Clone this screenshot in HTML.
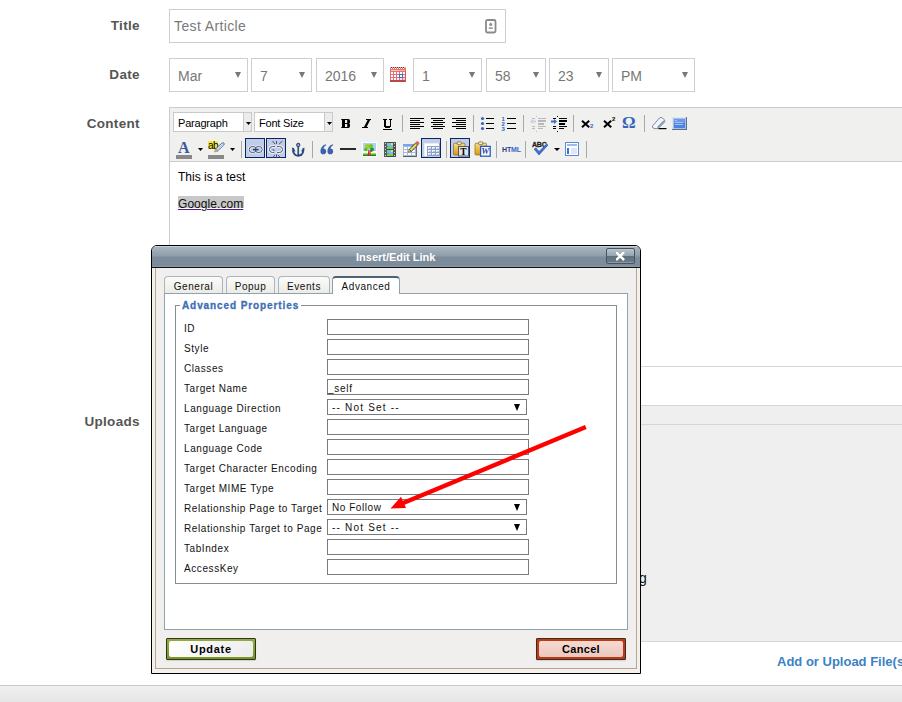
<!DOCTYPE html>
<html><head><meta charset="utf-8">
<style>
*{box-sizing:border-box;}
html,body{margin:0;padding:0;width:902px;height:702px;overflow:hidden;background:#fff;font-family:"Liberation Sans",sans-serif;}
.a{position:absolute;}
.lbl{position:absolute;font-weight:bold;font-size:13.5px;color:#555;text-align:right;width:100px;line-height:16px;letter-spacing:0.3px;}
.box{position:absolute;border:1px solid #cfcfcf;background:#fff;height:34px;top:58px;}
.box span{position:absolute;left:8px;top:9px;font-size:14px;color:#777;line-height:16px;}
.box i{position:absolute;right:6px;top:13px;width:0;height:0;border-left:3px solid transparent;border-right:3px solid transparent;border-top:6px solid #777;}
/* page regions */
.hl{position:absolute;left:0;width:902px;height:1px;background:#d6d6d6;}
/* dialog */
#dlg{position:absolute;left:151px;top:245px;width:490px;height:429px;border:1px solid #000;border-radius:6px 6px 0 0;background:#f0efed;overflow:hidden;}
#ttl{position:absolute;left:0;top:0;width:488px;height:22px;background:linear-gradient(#c6d1d9 0px,#c6d1d9 1px,#a9b6c0 1px,#8e9daa 10px,#7c8c9a 11px,#7c8c9a 20px,#8898a6 20px,#8898a6 21px);border-bottom:1px solid #111;}
#ttl span{position:absolute;left:204px;top:5px;font:bold 11px "Liberation Sans",sans-serif;color:#fff;line-height:13px;}
.dl{position:absolute;font-size:10px;letter-spacing:0.58px;color:#111;line-height:12px;white-space:nowrap;}
.inp{position:absolute;left:175px;width:202px;height:16px;border:1px solid #7b7b7b;background:#fff;}
.sel{position:absolute;left:175px;width:200px;height:16px;border:1px solid #7b7b7b;background:#fff;}
.sel span,.inp span{position:absolute;left:4px;top:2px;font-size:10px;letter-spacing:0.55px;line-height:12px;color:#111;white-space:nowrap;}
.sel i{position:absolute;right:6px;top:4px;width:0;height:0;border-left:3.5px solid transparent;border-right:3.5px solid transparent;border-top:7px solid #000;}
.tab{position:absolute;top:30px;height:17px;border:1px solid #a9b5bf;border-bottom:none;border-radius:4px 4px 0 0;background:linear-gradient(#fbfbf9,#ecebe5);font-size:10px;letter-spacing:0.55px;line-height:14px;padding-top:3px;text-align:center;color:#111;}
#frame{position:absolute;left:0;top:22px;width:488px;height:405px;border:3px solid #f5f0ea;border-top:none;border-bottom-width:4px;}
#frame:after{content:"";position:absolute;left:0;top:0;right:0;bottom:0;border:1px solid #b3a597;border-top:none;}
#panel{position:absolute;left:12px;top:47px;width:464px;height:337px;border:1px solid #8fa2b2;background:#fff;}
.tab.act{top:30px;height:18px;padding-top:2px;border-color:#8fa2b2;border-top:2px solid #4d6273;background:#fff;z-index:2;}
#fs{position:absolute;left:23px;top:59px;width:442px;height:279px;border:1px solid #84908f;}
#lg{position:absolute;left:28px;top:54px;padding:0 2px;background:#fff;font:bold 10px "Liberation Sans",sans-serif;letter-spacing:0.9px;color:#3d6eb3;-webkit-text-stroke:0.3px #3d6eb3;line-height:12px;}
.btn{position:absolute;top:392px;width:90px;height:22px;border:1px solid #2e3322;border-radius:1px;font:bold 11px "Liberation Sans",sans-serif;letter-spacing:0.7px;text-align:center;line-height:21px;color:#000;box-shadow:0 1px 1px rgba(0,0,0,0.12);}
.btn b{position:absolute;left:2px;top:2px;right:2px;bottom:2px;border-radius:2px;}
.btn span{position:relative;}
#bupd{left:14px;background:linear-gradient(#93ab3c,#7a9422);}
#bupd b{background:linear-gradient(135deg,#ffffff,#f3f3f3 60%,#ececec);}
#bcan{left:384px;background:#c63612;}
#bcan b{background:linear-gradient(#f6dad0,#ecc8be);}
#xbtn{position:absolute;left:454px;top:2px;width:29px;height:16px;border:1px solid #48545f;border-radius:2px;background:linear-gradient(#bcc7cf 0px,#b3bfc8 1px,#95a3ae 7px,#5e6f7e 7px,#6a7a88 13px,#8b98a2 13px);}
.tbt{font-size:11px;line-height:13px;color:#000;letter-spacing:-0.2px;white-space:nowrap;}
.serif{font-family:"Liberation Serif",serif;font-size:13px;line-height:14px;color:#000;}
.sep{width:1px;height:17px;background:#a8a8a8;}
.act2{top:138px;width:20px;height:20px;border:1px solid #0a246a;background:#c1cde6;}
</style></head><body>

<!-- Title row -->
<div class="lbl" style="left:39.8px;top:18px;">Title</div>
<div class="a" style="left:169px;top:9px;width:337px;height:34px;border:1px solid #cfcfcf;"></div>
<div class="a" style="left:174px;top:18px;font-size:14px;color:#7a7a7a;line-height:16px;letter-spacing:0.38px;">Test Article</div>

<!-- Date row -->
<div class="lbl" style="left:39.8px;top:67px;">Date</div>
<div class="box" style="left:169px;width:79px;"><span>Mar</span><i></i></div>
<div class="box" style="left:251px;width:61px;"><span>7</span><i></i></div>
<div class="box" style="left:316px;width:68px;"><span>2016</span><i></i></div>
<div class="box" style="left:413px;width:69px;"><span>1</span><i></i></div>
<div class="box" style="left:486px;width:60px;"><span>58</span><i></i></div>
<div class="box" style="left:549px;width:60px;"><span>23</span><i></i></div>
<div class="box" style="left:612px;width:83px;"><span>PM</span><i></i></div>

<!-- Content -->
<div class="lbl" style="left:39.8px;top:116px;">Content</div>
<div class="a" style="left:169px;top:107px;width:740px;height:260px;border:1px solid #ccc;background:#fff;"></div>
<div class="a" style="left:170px;top:108px;width:740px;height:54px;background:#f0f0ee;border-bottom:1px solid #ccc;"></div>
<div class="a" style="left:178px;top:170px;font-size:12px;line-height:14px;color:#000;">This is a test</div>
<div class="a" style="left:178px;top:196px;width:66px;height:12px;background:#c8c8c8;"></div>
<div class="a" style="left:178px;top:197px;font-size:12px;line-height:14px;color:#111;text-decoration:underline;text-decoration-color:#551a8b;letter-spacing:0.05px;">Google.com</div>


<!-- title input icon -->
<svg class="a" style="left:485px;top:19px;" width="12" height="15" viewBox="0 0 12 15"><rect x="1" y="1" width="9.5" height="12.5" rx="1.5" fill="none" stroke="#8a8a8a" stroke-width="1.8"/><path d="M5.75 3 L7.1 6.3 L4.4 6.3 Z" fill="#909090"/><circle cx="5.75" cy="5.6" r="1.5" fill="#909090"/><rect x="3.8" y="8.2" width="4" height="1.8" fill="#a0a0a0"/></svg>
<!-- calendar icon -->
<svg class="a" style="left:390px;top:67px;" width="16" height="15" viewBox="0 0 16 15" shape-rendering="crispEdges">
<rect x="0" y="1" width="16" height="14" fill="#e9706b"/>
<rect x="0" y="0" width="16" height="1" fill="#f2a9a5"/>
<g fill="#4a3a3a"><rect x="1" y="0" width="1" height="1"/><rect x="3" y="0" width="1" height="1"/><rect x="5" y="0" width="1" height="1"/><rect x="7" y="0" width="1" height="1"/><rect x="9" y="0" width="1" height="1"/><rect x="11" y="0" width="1" height="1"/><rect x="13" y="0" width="1" height="1"/></g>
<g fill="#fff"><rect x="1" y="1" width="1" height="1"/><rect x="3" y="1" width="1" height="1"/><rect x="5" y="1" width="1" height="1"/><rect x="7" y="1" width="1" height="1"/><rect x="9" y="1" width="1" height="1"/><rect x="11" y="1" width="1" height="1"/><rect x="13" y="1" width="1" height="1"/></g>
<rect x="1" y="3" width="7" height="1" fill="#f7d0ce"/><rect x="8" y="3" width="7" height="1" fill="#f0b0ad"/>
<g fill="#fff"><rect x="1" y="5" width="2" height="2"/><rect x="4" y="5" width="2" height="2"/><rect x="7" y="5" width="2" height="2"/><rect x="10" y="5" width="2" height="2"/><rect x="13" y="5" width="2" height="2"/>
<rect x="1" y="8" width="2" height="2"/><rect x="4" y="8" width="2" height="2"/><rect x="7" y="8" width="2" height="2"/><rect x="13" y="8" width="2" height="2" fill="#fbe3e2"/>
<rect x="1" y="11" width="2" height="2"/><rect x="4" y="11" width="2" height="2"/><rect x="7" y="11" width="2" height="2"/><rect x="10" y="11" width="2" height="2" fill="#fbe3e2"/><rect x="13" y="11" width="2" height="2" fill="#f5d0ce"/></g>
<rect x="9" y="7" width="4" height="4" fill="#2f6fe0"/><rect x="10" y="8" width="2" height="2" fill="#fff"/>
<rect x="0" y="13" width="16" height="2" fill="#b84a45"/><rect x="15" y="4" width="1" height="10" fill="#c9625d"/>
</svg>

<!-- editor toolbar -->
<div class="a" style="left:173px;top:112px;width:79px;height:20px;border:1px solid #c9c9c9;background:#fff;"></div>
<div class="a" style="left:243px;top:112px;width:9px;height:20px;border:1px solid #c9c9c9;background:#ececec;"></div>
<div class="a tbt" style="left:178px;top:117px;">Paragraph</div>
<svg class="a" style="left:246px;top:122px;" width="5" height="3"><path d="M0 0H5L2.5 3Z" fill="#000"/></svg>
<div class="a" style="left:254px;top:112px;width:79px;height:20px;border:1px solid #c9c9c9;background:#fff;"></div>
<div class="a" style="left:324px;top:112px;width:9px;height:20px;border:1px solid #c9c9c9;background:#ececec;"></div>
<div class="a tbt" style="left:259px;top:117px;">Font Size</div>
<svg class="a" style="left:327px;top:122px;" width="5" height="3"><path d="M0 0H5L2.5 3Z" fill="#000"/></svg>
<svg class="a" style="left:341px;top:119px;" width="10" height="10" viewBox="0 0 10 10"><path d="M0 0 H7.3 Q9 0 9 2 V3.2 Q9 4.2 8.2 4.5 Q9 4.8 9 5.8 V7 Q9 9 7.3 9 H0 V8.2 H1 V0.8 H0 Z" fill="#000"/><rect x="4" y="1" width="2.2" height="3" fill="#f0f0f0"/><rect x="4" y="5" width="2.2" height="3" fill="#f0f0f0"/></svg>
<svg class="a" style="left:362px;top:119px;" width="10" height="10" viewBox="0 0 10 10"><path d="M4 0 H9 V1 H8.2 L4.6 8 H6 V9 H0 V8 H2 L5.6 1 H4 Z" fill="#000"/></svg>
<svg class="a" style="left:383px;top:119px;" width="10" height="12" viewBox="0 0 10 12" shape-rendering="crispEdges"><rect x="0" y="0" width="4" height="1" fill="#000"/><rect x="6" y="0" width="3" height="1" fill="#000"/><rect x="1" y="0" width="2" height="8" fill="#000"/><rect x="7" y="0" width="1" height="8" fill="#000"/><rect x="2" y="7" width="5" height="2" fill="#000"/><rect x="0" y="10" width="9" height="1" fill="#000"/></svg>
<div class="a sep" style="left:402px;top:115px;"></div>
<div class="a sep" style="left:473px;top:115px;"></div>
<div class="a sep" style="left:523px;top:115px;"></div>
<div class="a sep" style="left:573px;top:115px;"></div>
<div class="a sep" style="left:644px;top:115px;"></div>
<div class="a sep" style="left:241px;top:141px;"></div>
<div class="a sep" style="left:312px;top:141px;"></div>
<div class="a sep" style="left:446px;top:141px;"></div>
<div class="a sep" style="left:496px;top:141px;"></div>
<div class="a sep" style="left:525px;top:141px;"></div>
<div class="a sep" style="left:586px;top:141px;"></div>
<svg class="a" style="left:410px;top:117px;" width="14" height="12" shape-rendering="crispEdges"><rect x="0" y="1" width="14" height="1" fill="#000"/><rect x="0" y="3" width="10" height="1" fill="#000"/><rect x="0" y="5" width="14" height="1" fill="#000"/><rect x="0" y="7" width="10" height="1" fill="#000"/><rect x="0" y="9" width="14" height="1" fill="#000"/><rect x="0" y="11" width="10" height="1" fill="#000"/></svg>
<svg class="a" style="left:431px;top:117px;" width="14" height="12" shape-rendering="crispEdges"><rect x="0" y="1" width="14" height="1" fill="#000"/><rect x="2" y="3" width="10" height="1" fill="#000"/><rect x="0" y="5" width="14" height="1" fill="#000"/><rect x="2" y="7" width="10" height="1" fill="#000"/><rect x="0" y="9" width="14" height="1" fill="#000"/><rect x="2" y="11" width="10" height="1" fill="#000"/></svg>
<svg class="a" style="left:452px;top:117px;" width="14" height="12" shape-rendering="crispEdges"><rect x="0" y="1" width="14" height="1" fill="#000"/><rect x="4" y="3" width="10" height="1" fill="#000"/><rect x="0" y="5" width="14" height="1" fill="#000"/><rect x="4" y="7" width="10" height="1" fill="#000"/><rect x="0" y="9" width="14" height="1" fill="#000"/><rect x="4" y="11" width="10" height="1" fill="#000"/></svg>
<svg class="a" style="left:480px;top:116px;" width="16" height="15"><g fill="#3a64b8"><circle cx="2.5" cy="2.5" r="1.6"/><circle cx="2.5" cy="7.5" r="1.6"/><circle cx="2.5" cy="12.5" r="1.6"/></g><g fill="#000" shape-rendering="crispEdges"><rect x="6" y="2" width="8" height="1"/><rect x="6" y="7" width="8" height="1"/><rect x="6" y="12" width="8" height="1"/></g></svg>
<svg class="a" style="left:501px;top:116px;" width="16" height="15"><g fill="#2f5ec8" font-family="Liberation Sans" font-weight="bold" font-size="6"><text x="0.5" y="5">1</text><text x="0.5" y="10">2</text><text x="0.5" y="15">3</text></g><g fill="#000" shape-rendering="crispEdges"><rect x="6" y="2" width="9" height="1"/><rect x="6" y="7" width="9" height="1"/><rect x="6" y="12" width="9" height="1"/></g></svg>
<svg class="a" style="left:530px;top:116px;" width="17" height="16" shape-rendering="crispEdges"><g fill="#b9b9b9"><rect x="6" y="0" width="1" height="1"/><rect x="6" y="15" width="1" height="1"/><rect x="2" y="2" width="3" height="1"/><rect x="8" y="2" width="8" height="1"/><rect x="8" y="4" width="8" height="2"/><rect x="8" y="7" width="6" height="2"/><rect x="2" y="10" width="3" height="1"/><rect x="8" y="10" width="8" height="1"/><rect x="2" y="12" width="3" height="1"/><rect x="8" y="12" width="5" height="1"/></g><path d="M0 5.5 L3 3 L3 4.5 L6 4.5 L6 6.5 L3 6.5 L3 8Z" fill="#c6d3ee" shape-rendering="auto"/></svg>
<svg class="a" style="left:551px;top:116px;" width="17" height="16" shape-rendering="crispEdges"><g fill="#000"><rect x="6" y="0" width="1" height="1"/><rect x="6" y="15" width="1" height="1"/><rect x="2" y="2" width="3" height="1"/><rect x="8" y="2" width="8" height="1"/><rect x="8" y="4" width="8" height="2"/><rect x="8" y="7" width="6" height="2"/><rect x="2" y="10" width="3" height="1"/><rect x="8" y="10" width="8" height="1"/><rect x="2" y="12" width="3" height="1"/><rect x="8" y="12" width="5" height="1"/></g><path d="M6 5.5 L3 3 L3 4.5 L0 4.5 L0 6.5 L3 6.5 L3 8Z" fill="#3a6ad0" shape-rendering="auto"/></svg>
<svg class="a" style="left:581px;top:120px;" width="10" height="8" viewBox="0 0 10 8"><path d="M1 0.8 L8.2 7.2 M8.2 0.8 L1 7.2" stroke="#000" stroke-width="2.0"/></svg>
<div class="a" style="left:590px;top:123px;font:bold 6px 'Liberation Sans',sans-serif;line-height:7px;color:#3a64b8;">2</div>
<svg class="a" style="left:603px;top:120px;" width="10" height="8" viewBox="0 0 10 8"><path d="M1 0.8 L8.2 7.2 M8.2 0.8 L1 7.2" stroke="#000" stroke-width="2.0"/></svg>
<div class="a" style="left:612px;top:116px;font:bold 6px 'Liberation Sans',sans-serif;line-height:7px;color:#000;">2</div>
<div class="a" style="left:622px;top:114px;font:bold 17px 'Liberation Serif',serif;line-height:17px;color:#3a64b8;">&#937;</div>
<svg class="a" style="left:651px;top:116px;" width="16" height="14" viewBox="0 0 16 14"><path d="M1.5 10 L8.5 2 Q10 0.8 11.5 2 L13.3 3.8 Q14.5 5 13.3 6.3 L7 12.6 L4 12.6 Q1.5 12.3 1.3 11 Z" fill="#f2f5fb" stroke="#6a7fa0" stroke-width="0.9"/><path d="M13.3 4.2 Q14.3 5.2 13.2 6.4 L7.4 12.2 L5.8 11.2 L11.8 5 Z" fill="#8b9cb8"/><rect x="7.5" y="12" width="8" height="1.2" fill="#000"/></svg>
<svg class="a" style="left:672px;top:117px;" width="15" height="13" viewBox="0 0 15 13" shape-rendering="crispEdges"><rect x="0" y="0" width="15" height="13" fill="#5a6e90"/><rect x="0" y="0" width="14" height="12" fill="#dfe7f5"/><rect x="1" y="1" width="13" height="11" fill="#aebfe0"/><rect x="2" y="2" width="11" height="9" fill="#4f83e2"/><rect x="2" y="2" width="11" height="4" fill="#6d97e8"/><g fill="#a8c4f4"><rect x="3" y="3" width="2" height="1"/><rect x="3" y="5" width="8" height="1"/><rect x="3" y="7" width="8" height="1"/></g></svg>

<!-- row 2 -->
<div class="a serif" style="left:178px;top:140px;font-size:16px;line-height:16px;font-weight:bold;color:#3a5c9c;">A</div>
<div class="a" style="left:176px;top:155px;width:16px;height:4px;background:#888;"></div>
<svg class="a" style="left:198px;top:148px;" width="5" height="3"><path d="M0 0H5L2.5 3Z" fill="#000"/></svg>
<div class="a" style="left:208px;top:141px;width:10px;height:8px;background:#f3ea40;"></div>
<div class="a" style="left:208px;top:140px;font:10px 'Liberation Sans',sans-serif;line-height:11px;color:#000;letter-spacing:-0.5px;">ab</div>
<svg class="a" style="left:213px;top:142px;" width="12" height="11" viewBox="0 0 12 11"><path d="M2.5 7 L8.8 1.2 Q10 0.3 11 1.2 Q11.6 2 10.8 3 L4.6 9 Z" fill="#e8f0fb" stroke="#41608f" stroke-width="0.9"/><path d="M2.5 7 L4.6 9 L1.5 10 Z" fill="#e9c27a" stroke="#8a6a30" stroke-width="0.5"/><path d="M4 7.5 L9.8 2" stroke="#9ab4dc" stroke-width="0.8"/></svg>
<div class="a" style="left:208px;top:155px;width:16px;height:4px;background:#888;"></div>
<svg class="a" style="left:230px;top:148px;" width="5" height="3"><path d="M0 0H5L2.5 3Z" fill="#000"/></svg>
<div class="a act2" style="left:245px;"></div>
<div class="a act2" style="left:266px;"></div>
<div class="a act2" style="left:421px;"></div>
<div class="a act2" style="left:450px;"></div>
<svg class="a" style="left:248px;top:145px;" width="16" height="9" viewBox="0 0 16 9"><g fill="none"><rect x="1.2" y="1.5" width="7" height="6" rx="3" stroke="#f4f6fa" stroke-width="2.2"/><rect x="7.2" y="1.5" width="7" height="6" rx="3" stroke="#f4f6fa" stroke-width="2.2"/><rect x="1.2" y="1.5" width="7" height="6" rx="3" stroke="#4b5a6e" stroke-width="1"/><rect x="7.2" y="1.5" width="7" height="6" rx="3" stroke="#4b5a6e" stroke-width="1"/></g><rect x="5" y="3.8" width="5.5" height="1.6" fill="#1c3f94"/></svg>
<svg class="a" style="left:267px;top:140px;" width="19" height="18" viewBox="0 0 19 18"><g fill="none" stroke-linecap="round"><path d="M7.5 6.5 H5.5 Q2.5 6.5 2.5 9.5 Q2.5 12.5 5.5 12.5 H7" stroke="#f4f6fa" stroke-width="2.4"/><path d="M10.5 6.5 H12.5 Q15.5 6.5 15.5 9.5 Q15.5 12.5 12.5 12.5 H10.5" stroke="#f4f6fa" stroke-width="2.4"/><path d="M7.5 6.5 H5.5 Q2.5 6.5 2.5 9.5 Q2.5 12.5 5.5 12.5 H7" stroke="#4b5a6e" stroke-width="1"/><path d="M10.5 6.5 H12.5 Q15.5 6.5 15.5 9.5 Q15.5 12.5 12.5 12.5 H10.5" stroke="#4b5a6e" stroke-width="1"/></g><path d="M7 9.5 L5 9.5 L7.5 11.5Z" fill="#1c3f94"/><g stroke="#3a4660" stroke-width="0.9"><path d="M9.5 1V4"/><path d="M5.5 1L8 4"/><path d="M15.5 1L12 4.2"/><path d="M9.5 14.5V18"/><path d="M5.5 18L8 14.8"/><path d="M13.5 18L11 14.8"/></g></svg>
<svg class="a" style="left:292px;top:142px;" width="13" height="15" viewBox="0 0 13 15"><circle cx="6.2" cy="3" r="1.5" fill="#dfe6f2" stroke="#34507e" stroke-width="1.3"/><rect x="5.4" y="4.3" width="1.7" height="9" fill="#34507e"/><path d="M1.2 6 L1.3 10 Q2.5 13.6 6.2 13.8 Q9.9 13.6 11.1 10 L11.6 6.2" fill="none" stroke="#2e4a7e" stroke-width="1.9"/><path d="M0.3 5 L3.6 9.2 L0.6 9.8Z" fill="#2e4a7e"/><path d="M12.2 5.2 L8.9 9.2 L11.9 9.8Z" fill="#2e4a7e"/><rect x="5.8" y="12.6" width="4" height="1.2" fill="#1a3aa0"/></svg>
<svg class="a" style="left:320px;top:144px;" width="14" height="11" viewBox="0 0 14 11"><g fill="#3a62b0"><circle cx="3.3" cy="7.4" r="2.8"/><path d="M0.5 7.5 C0.4 4 2.4 1.3 5.8 0.2 L6.2 1.2 C4.3 2.2 3.4 3.6 3.6 5.2 L0.8 6.5Z"/><circle cx="10.3" cy="7.4" r="2.8"/><path d="M7.5 7.5 C7.4 4 9.4 1.3 12.8 0.2 L13.2 1.2 C11.3 2.2 10.4 3.6 10.6 5.2 L7.8 6.5Z"/></g></svg>
<div class="a" style="left:340px;top:148px;width:16px;height:2px;background:#2a2a2a;"></div>
<svg class="a" style="left:362px;top:142px;" width="15" height="15" viewBox="0 0 15 15" shape-rendering="crispEdges"><rect x="0" y="0" width="15" height="15" fill="#fdfdfd"/><rect x="1" y="1" width="13" height="8" fill="#a9d1f7"/><rect x="1" y="9" width="13" height="2" fill="#fdfdfd"/><rect x="1" y="11" width="13" height="3" fill="#5ab82a"/><rect x="1" y="11" width="13" height="1" fill="#a8dc50"/><rect x="1" y="13" width="13" height="1" fill="#0d8a0d"/><g shape-rendering="auto"><circle cx="5.5" cy="4.5" r="2.6" fill="#9ad22a"/><circle cx="9" cy="4" r="2" fill="#7cc21e"/><circle cx="10" cy="7.5" r="2" fill="#1e9a22"/><circle cx="3.8" cy="7.5" r="1.7" fill="#6cb81a"/><path d="M7 8 L6.2 13.5 L8 13.5 L8 10 L10 8.5" stroke="#b8282a" stroke-width="1.1" fill="none"/></g></svg>
<svg class="a" style="left:384px;top:142px;" width="12" height="15" viewBox="0 0 12 15" shape-rendering="crispEdges"><rect x="0" y="0" width="12" height="15" fill="#454545"/><rect x="0" y="0" width="3" height="15" fill="#5a5a5a"/><rect x="9" y="0" width="3" height="15" fill="#505050"/><rect x="3" y="1" width="6" height="6" fill="#6cc0f0"/><rect x="3" y="8" width="6" height="6" fill="#6cc0f0"/><rect x="3" y="5" width="6" height="2" fill="#78d050"/><rect x="3" y="12" width="6" height="2" fill="#78d050"/><rect x="3" y="4" width="2" height="1" fill="#50b040"/><rect x="3" y="11" width="2" height="1" fill="#50b040"/><rect x="7" y="1" width="2" height="2" fill="#f0e060"/><rect x="7" y="8" width="2" height="2" fill="#f0e060"/><g fill="#cfcfcf"><rect x="1" y="1" width="1" height="1"/><rect x="1" y="4" width="1" height="1"/><rect x="1" y="7" width="1" height="1"/><rect x="1" y="10" width="1" height="1"/><rect x="1" y="13" width="1" height="1"/><rect x="10" y="1" width="1" height="1"/><rect x="10" y="4" width="1" height="1"/><rect x="10" y="7" width="1" height="1"/><rect x="10" y="10" width="1" height="1"/><rect x="10" y="13" width="1" height="1"/></g></svg>
<svg class="a" style="left:403px;top:141px;" width="17" height="16" viewBox="0 0 17 16"><g shape-rendering="crispEdges"><rect x="0" y="3" width="14" height="13" fill="#a9b9d2"/><rect x="0" y="3" width="14" height="2" fill="#7ca2ea"/><g fill="#fbfcfe"><rect x="1" y="6" width="3" height="2"/><rect x="5" y="6" width="3" height="2"/><rect x="9" y="6" width="3" height="2"/><rect x="1" y="9" width="3" height="2"/><rect x="5" y="9" width="3" height="2"/><rect x="9" y="9" width="3" height="2"/><rect x="1" y="12" width="3" height="2"/><rect x="5" y="12" width="3" height="2"/><rect x="9" y="12" width="3" height="2"/></g><rect x="0" y="15" width="14" height="1" fill="#4c5c7a"/><rect x="13" y="5" width="1" height="11" fill="#5e6e8c"/></g><path d="M6.3 8.4 L13 1.6 L15.1 3.6 L8.3 10.3 Z" fill="#f2d95a" stroke="#222" stroke-width="0.8"/><path d="M6.3 8.4 L8.3 10.3 L5.4 11.2 Z" fill="#f0f0f0" stroke="#333" stroke-width="0.6"/><circle cx="14.3" cy="2.2" r="1.9" fill="#d8654c"/></svg>
<svg class="a" style="left:424px;top:143px;" width="16" height="13" viewBox="0 0 16 13" shape-rendering="crispEdges"><rect x="0" y="0" width="16" height="13" fill="#fff"/><rect x="0" y="0" width="16" height="1" fill="#e8ecf4"/><rect x="3" y="3" width="13" height="10" fill="#8da0c4"/><g fill="#f2f5fb"><rect x="4" y="4" width="3" height="2"/><rect x="8" y="4" width="3" height="2"/><rect x="12" y="4" width="3" height="2"/><rect x="4" y="7" width="3" height="2"/><rect x="8" y="7" width="3" height="2"/><rect x="12" y="7" width="3" height="2"/><rect x="4" y="10" width="3" height="2"/><rect x="8" y="10" width="3" height="2"/><rect x="12" y="10" width="3" height="2"/></g><g fill="#b9c8e6"><rect x="5" y="5" width="2" height="1"/><rect x="9" y="5" width="2" height="1"/><rect x="13" y="5" width="2" height="1"/><rect x="5" y="8" width="2" height="1"/><rect x="9" y="8" width="2" height="1"/><rect x="13" y="8" width="2" height="1"/><rect x="5" y="11" width="2" height="1"/><rect x="9" y="11" width="2" height="1"/><rect x="13" y="11" width="2" height="1"/></g><rect x="0" y="0" width="1" height="13" fill="#e8ecf4"/><rect x="15" y="0" width="1" height="13" fill="#8da0c4"/></svg>
<svg class="a" style="left:452px;top:141px;" width="18" height="16" viewBox="0 0 18 16"><defs><linearGradient id="gold" x1="0" y1="0" x2="0" y2="1"><stop offset="0" stop-color="#f6de84"/><stop offset="1" stop-color="#d8990e"/></linearGradient></defs><rect x="1.5" y="2.2" width="11.5" height="11.8" rx="1" fill="url(#gold)" stroke="#8a6a20" stroke-width="0.7"/><rect x="5.2" y="0.8" width="4" height="2.8" rx="0.8" fill="#f3ebc8" stroke="#6a5a3a" stroke-width="0.7"/><rect x="6.5" y="5.5" width="10" height="9.5" fill="#dfe5ee" stroke="#4a4a4a" stroke-width="0.9"/><text x="11.5" y="13.6" text-anchor="middle" font-family="Liberation Serif" font-weight="bold" font-size="9.5" fill="#000">T</text></svg>
<svg class="a" style="left:474px;top:141px;" width="17" height="16" viewBox="0 0 17 16"><rect x="1" y="2.2" width="11.5" height="11.8" rx="1" fill="url(#gold)" stroke="#8a6a20" stroke-width="0.7"/><rect x="4.7" y="0.8" width="4" height="2.8" rx="0.8" fill="#f3ebc8" stroke="#6a5a3a" stroke-width="0.7"/><rect x="6.6" y="5.4" width="9.6" height="9.8" fill="#fff" stroke="#2a56c0" stroke-width="1.3"/><text x="11.3" y="13.4" text-anchor="middle" font-family="Liberation Serif" font-weight="bold" font-style="italic" font-size="9" fill="#1e4aa8">W</text></svg>
<div class="a" style="left:502px;top:146px;font:bold 7px 'Liberation Sans',sans-serif;line-height:8px;color:#1f3f88;letter-spacing:-0.15px;">HT<span style="color:#3a66c8">ML</span></div>
<div class="a" style="left:532px;top:141px;font:bold 7px 'Liberation Sans',sans-serif;line-height:8px;color:#222;letter-spacing:-0.2px;-webkit-text-stroke:0.3px #222;">ABC</div>
<svg class="a" style="left:533px;top:143px;" width="16" height="13"><path d="M1 6 L6 12 L15 2 L13.5 1 L6 8.5 L3 5Z" fill="#3f6fd8" stroke="#2a50a8" stroke-width="0.6"/></svg>
<svg class="a" style="left:554px;top:148px;" width="6" height="3"><path d="M0 0H6L3 3Z" fill="#000"/></svg>
<svg class="a" style="left:565px;top:142px;" width="14" height="14" shape-rendering="crispEdges"><rect x="0.5" y="0.5" width="13" height="13" fill="#fff" stroke="#5b8ad6"/><rect x="2" y="2" width="10" height="2" fill="#9bbaf0"/><rect x="2" y="6" width="2" height="6" fill="#3f6fd0"/><rect x="6" y="6" width="6" height="6" fill="#dde7f7"/></svg>

<!-- region lines -->
<div class="hl" style="top:366px;left:169px;"></div>
<div class="a" style="left:169px;top:405px;width:733px;height:236px;background:#efefef;border-top:1px solid #d6d6d6;"></div>
<div class="hl" style="top:424px;left:169px;"></div>
<div class="hl" style="top:641px;left:169px;"></div>
<div class="lbl" style="left:39.8px;top:414px;">Uploads</div>
<div class="a" style="left:639px;top:570px;font-size:14px;line-height:16px;color:#111;">g</div>

<div class="a" style="left:777px;top:654px;font:bold 13px 'Liberation Sans',sans-serif;color:#3b82c4;line-height:16px;white-space:nowrap;">Add or Upload File(s)</div>
<div class="a" style="left:0;top:685px;width:902px;height:17px;background:linear-gradient(#f0f0f0,#e5e5e5);border-top:1px solid #c9c9c9;"></div>

<!-- Dialog -->
<div id="dlg">
  <div id="ttl"><span>Insert/Edit Link</span></div>
  <div id="frame"></div>
  <div class="tab" style="left:12px;width:59px;">General</div>
  <div class="tab" style="left:74px;width:49px;">Popup</div>
  <div class="tab" style="left:126px;width:52px;">Events</div>
  <div id="panel"></div>
  <div class="tab act" style="left:180px;width:68px;">Advanced</div>
  <div id="fs"></div>
  <div id="lg">Advanced Properties</div>
  <div class="dl" style="left:32px;top:77px;">ID</div>
  <div class="inp" style="top:73px;"></div>
  <div class="dl" style="left:32px;top:97px;">Style</div>
  <div class="inp" style="top:93px;"></div>
  <div class="dl" style="left:32px;top:117px;">Classes</div>
  <div class="inp" style="top:113px;"></div>
  <div class="dl" style="left:32px;top:137px;">Target Name</div>
  <div class="inp" style="top:133px;"><span style="left:0px;top:3px;letter-spacing:0.7px">_self</span></div>
  <div class="dl" style="left:32px;top:157px;">Language Direction</div>
  <div class="sel" style="top:153px;"><span style="letter-spacing:1.2px">-- Not Set --</span><i></i></div>
  <div class="dl" style="left:32px;top:177px;">Target Language</div>
  <div class="inp" style="top:173px;"></div>
  <div class="dl" style="left:32px;top:197px;">Language Code</div>
  <div class="inp" style="top:193px;"></div>
  <div class="dl" style="left:32px;top:217px;">Target Character Encoding</div>
  <div class="inp" style="top:213px;"></div>
  <div class="dl" style="left:32px;top:237px;">Target MIME Type</div>
  <div class="inp" style="top:233px;"></div>
  <div class="dl" style="left:32px;top:257px;">Relationship Page to Target</div>
  <div class="sel" style="top:253px;"><span>No Follow</span><i></i></div>
  <div class="dl" style="left:32px;top:277px;">Relationship Target to Page</div>
  <div class="sel" style="top:273px;"><span style="letter-spacing:1.2px">-- Not Set --</span><i></i></div>
  <div class="dl" style="left:32px;top:297px;">TabIndex</div>
  <div class="inp" style="top:293px;"></div>
  <div class="dl" style="left:32px;top:317px;">AccessKey</div>
  <div class="inp" style="top:313px;"></div>
  <div id="bupd" class="btn"><b></b><span>Update</span></div>
  <div id="bcan" class="btn"><b></b><span style="letter-spacing:0.3px">Cancel</span></div>
  <div id="xbtn"><svg style="position:absolute;left:9px;top:3px" width="9" height="9" viewBox="0 0 9 9"><path d="M1 1L7.2 7.2M7.2 1L1 7.2" stroke="#fff" stroke-width="2.4" stroke-linecap="square"/></svg></div>
</div>

<svg class="a" style="left:0;top:0;z-index:10;" width="902" height="702"><path d="M585.8 427 L402 503.5" stroke="#ff0000" stroke-width="4.4" stroke-linecap="butt"/><path d="M390.5 508.5 L401 496.8 L406 508 Z" fill="#ff0000"/></svg>
</body></html>
